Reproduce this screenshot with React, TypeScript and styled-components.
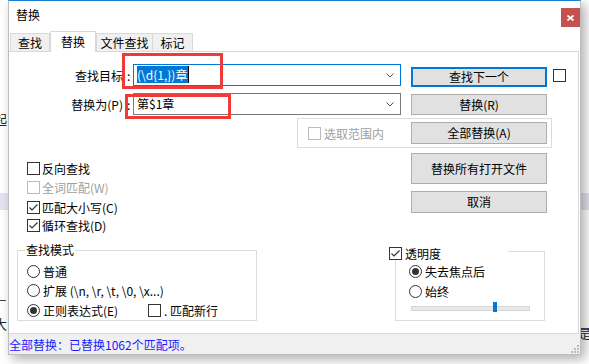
import React from "react";
import styled, { createGlobalStyle } from "styled-components";

const GlobalStyle = createGlobalStyle`
  * { box-sizing: border-box; }
  html, body { margin: 0; padding: 0; background: #fff; }
  body {
    width: 589px;
    height: 364px;
    overflow: hidden;
    font-family: "Noto Sans CJK SC", "Microsoft YaHei", sans-serif;
    font-size: 12px;
    color: #000;
  }
`;

const Page = styled.div`
  display: flex;
  width: 589px;
  height: 364px;
  background: #fff;
  overflow: hidden;
`;

const Backdrop = styled.div<{ $w: number }>`
  width: ${(p) => p.$w}px;
  flex: none;
  display: flex;
  flex-direction: column;
  overflow: hidden;
`;

const BgGlyph = styled.div<{ $top: number; $shift: number }>`
  flex: none;
  margin-top: ${(p) => p.$top}px;
  margin-left: ${(p) => p.$shift}px;
  height: 14px;
  line-height: 14px;
  font-size: 13px;
  white-space: nowrap;
  color: #222;
`;

const BgBand = styled.div<{ $top: number; $h: number }>`
  flex: none;
  margin-top: ${(p) => p.$top}px;
  height: ${(p) => p.$h}px;
  background: #e3e3f3;
`;

const BgRule = styled.div<{ $top: number }>`
  flex: none;
  margin-top: ${(p) => p.$top}px;
  height: 1px;
  width: 6px;
  background: #444;
`;

const Dialog = styled.div`
  position: relative;
  z-index: 1;
  flex: none;
  width: 573px;
  height: 355px;
  display: flex;
  flex-direction: column;
  background: #fff;
  border: 1px solid #bdbdbd;
  border-top: 1px solid #1a7fd6;
  box-shadow: 4px 4px 11px rgba(0, 0, 0, 0.32);
`;

const TitleBar = styled.div`
  height: 30px;
  flex: none;
  display: flex;
  justify-content: space-between;
  align-items: flex-start;
`;

const Title = styled.div`
  padding: 5px 0 0 7px;
  line-height: 18px;
`;

const CloseButton = styled.div`
  width: 19px;
  height: 19px;
  margin-top: 7px;
  background: #c75050;
  display: flex;
  align-items: center;
  justify-content: center;
`;

const TabStrip = styled.div`
  height: 20px;
  flex: none;
  display: flex;
  align-items: flex-end;
  padding-left: 1px;
  position: relative;
  z-index: 1;
`;

const Tab = styled.div<{ $active?: boolean; $w: number; $overlap?: boolean }>`
  width: ${(p) => p.$w}px;
  height: ${(p) => (p.$active ? 21 : 18)}px;
  margin-bottom: ${(p) => (p.$active ? -1 : 0)}px;
  margin-left: ${(p) => (p.$overlap ? -1 : 0)}px;
  border: 1px solid #d9d9d9;
  border-bottom: none;
  background: ${(p) => (p.$active ? "#fff" : "#f0f0f0")};
  display: flex;
  align-items: center;
  justify-content: center;
  line-height: 1;
  white-space: nowrap;
`;

const Pane = styled.div`
  flex: 1;
  margin-right: 1px;
  border-top: 1px solid #d9d9d9;
  border-right: 1px solid #d9d9d9;
  display: flex;
  flex-direction: column;
`;

const FieldRow = styled.div<{ $mt: number }>`
  display: flex;
  align-items: flex-start;
  height: 22px;
  margin-top: ${(p) => p.$mt}px;
`;

const FieldLabel = styled.label`
  width: 124px;
  height: 22px;
  flex: none;
  display: flex;
  align-items: center;
  justify-content: flex-end;
  white-space: nowrap;
`;

const Colon = styled.span`
  width: 10px;
  padding-left: 4px;
  flex: none;
`;

const Combo = styled.div<{ $focused?: boolean }>`
  width: 268px;
  height: 22px;
  flex: none;
  border: 1px solid ${(p) => (p.$focused ? "#0078d7" : "#7a7a7a")};
  background: #fff;
  display: flex;
  align-items: center;
  padding: 0 6px 0 3px;
`;

const ComboText = styled.span`
  flex: 1;
  line-height: 14px;
  white-space: nowrap;
`;

const Selected = styled.span`
  background: #0078d7;
  color: #fff;
  padding-right: 1px;
  border-right: 1px solid #000;
`;

const Button = styled.button<{
  $focused?: boolean;
  $h: number;
  $mt?: number;
  $ml?: number;
  $push?: boolean;
}>`
  width: 136px;
  height: ${(p) => p.$h}px;
  margin: ${(p) => p.$mt ?? 0}px 0 0 ${(p) => (p.$push ? "auto" : `${p.$ml ?? 0}px`)};
  flex: none;
  padding: 0;
  background: #e1e1e1;
  border: ${(p) => (p.$focused ? "2px solid #0078d7" : "1px solid #adadad")};
  font: inherit;
  font-size: 12px;
  color: #000;
  line-height: 1;
  display: flex;
  align-items: center;
  justify-content: center;
`;

const Box = styled.span<{ $disabled?: boolean; $mt?: number; $ml?: number }>`
  width: 13px;
  height: 13px;
  flex: none;
  margin: ${(p) => p.$mt ?? 0}px 0 0 ${(p) => p.$ml ?? 0}px;
  border: 1px solid ${(p) => (p.$disabled ? "#bcbcbc" : "#333")};
  background: #fff;
  display: flex;
  align-items: center;
  justify-content: center;
`;

const RadioCircle = styled.span<{ $on?: boolean }>`
  width: 13px;
  height: 13px;
  flex: none;
  border-radius: 50%;
  border: 1px solid #333;
  background: #fff;
  display: flex;
  align-items: center;
  justify-content: center;
  &::after {
    content: "";
    width: 7px;
    height: 7px;
    border-radius: 50%;
    background: ${(p) => (p.$on ? "#333" : "transparent")};
  }
`;

const Option = styled.div<{ $gap?: number; $disabled?: boolean; $mt?: number; $h?: number }>`
  display: flex;
  align-items: center;
  gap: ${(p) => p.$gap ?? 3}px;
  margin-top: ${(p) => p.$mt ?? 0}px;
  height: ${(p) => (p.$h ? `${p.$h}px` : "auto")};
  color: ${(p) => (p.$disabled ? "#a0a0a0" : "#000")};
  line-height: 13px;
  white-space: nowrap;
`;

const ScopeGroup = styled.div`
  margin: 3px 0 0 288px;
  width: 255px;
  height: 30px;
  border: 1px solid #dcdcdc;
  display: flex;
  align-items: center;
  padding: 0 4px 0 10px;
`;

const LowerArea = styled.div`
  display: grid;
  grid-template-columns: 402px 136px;
  align-items: start;
`;

const CheckList = styled.div`
  display: flex;
  flex-direction: column;
  padding-left: 18px;
`;

const ActionCol = styled.div`
  display: flex;
  flex-direction: column;
`;

const BottomArea = styled.div`
  display: flex;
  align-items: flex-start;
  margin-top: 18px;
`;

const Group = styled.div<{ $ml: number; $mt: number; $w: number; $h: number; $pl: number; $pt: number }>`
  position: relative;
  flex: none;
  margin: ${(p) => p.$mt}px 0 0 ${(p) => p.$ml}px;
  width: ${(p) => p.$w}px;
  height: ${(p) => p.$h}px;
  border: 1px solid #dcdcdc;
  padding: ${(p) => p.$pt}px 0 0 ${(p) => p.$pl}px;
  display: flex;
  flex-direction: column;
`;

const Legend = styled.div`
  position: absolute;
  top: -8px;
  left: 7px;
  padding: 0 1px;
  background: #fff;
  line-height: 14px;
`;

const CheckLegend = styled.div`
  position: absolute;
  top: -5px;
  left: -7px;
  width: 119px;
  height: 13px;
  background: #fff;
  display: flex;
  align-items: center;
  gap: 3px;
  line-height: 13px;
`;

const RadioRow = styled.div`
  height: 19.5px;
  display: flex;
  align-items: center;
  gap: 3px;
  white-space: nowrap;
`;

const SplitRow = styled.div`
  height: 19.5px;
  display: grid;
  grid-template-columns: 121px auto;
  align-items: center;
`;

const Slider = styled.div`
  position: relative;
  width: 119px;
  height: 10px;
  margin: 1px 0 0 2px;
`;

const Track = styled.div`
  position: absolute;
  left: 0;
  right: 0;
  top: 4px;
  height: 5px;
  background: #e7eaea;
  border: 1px solid #d6d6d6;
`;

const Thumb = styled.div<{ $pos: number }>`
  position: absolute;
  top: 0;
  left: ${(p) => p.$pos}px;
  width: 4px;
  height: 10px;
  background: #0078d7;
`;

const StatusBar = styled.div`
  height: 21px;
  flex: none;
  border-top: 1px solid #dadada;
  background: #f0f0f0;
  display: flex;
  align-items: center;
  justify-content: space-between;
  color: #1a1aff;
  white-space: nowrap;
`;

const Grip = styled.svg`
  align-self: flex-end;
  margin: 0 1px 1px 0;
`;

const Annotation = styled.div<{ $x: number; $y: number; $w: number; $h: number }>`
  position: absolute;
  left: ${(p) => p.$x}px;
  top: ${(p) => p.$y}px;
  width: ${(p) => p.$w}px;
  height: ${(p) => p.$h}px;
  border: 3px solid #f03a3a;
  pointer-events: none;
`;

const Check = () => (
  <svg width="11" height="11" viewBox="0 0 11 11">
    <polyline points="1.5,5.5 4,8 9.5,2.5" fill="none" stroke="#333" strokeWidth="1.2" />
  </svg>
);

const Chevron = () => (
  <svg width="8" height="5" viewBox="0 0 8 5">
    <polyline points="0.5,0.5 4,4 7.5,0.5" fill="none" stroke="#555" strokeWidth="1" />
  </svg>
);

const CheckOption: React.FC<{ label: string; checked?: boolean; disabled?: boolean; mt?: number; gap?: number }> = ({
  label,
  checked,
  disabled,
  mt,
  gap,
}) => (
  <Option $mt={mt} $gap={gap ?? 2} $disabled={disabled} $h={13}>
    <Box $disabled={disabled}>{checked && <Check />}</Box>
    <span>{label}</span>
  </Option>
);

const Radio: React.FC<{ label: string; on?: boolean }> = ({ label, on }) => (
  <RadioRow>
    <RadioCircle $on={on} />
    <span>{label}</span>
  </RadioRow>
);

export default function App() {
  return (
    <>
      <GlobalStyle />
      <Page>
        <Backdrop $w={8}>
          <BgGlyph $top={112} $shift={-6}>起</BgGlyph>
          <BgBand $top={67} $h={17} />
          <BgRule $top={90} />
          <BgGlyph $top={16} $shift={-6}>大</BgGlyph>
        </Backdrop>

        <Dialog>
          <TitleBar>
            <Title>替换</Title>
            <CloseButton>
              <svg width="7" height="6" viewBox="0 0 7 6">
                <path d="M0.5 0.5 L6.5 5.5 M6.5 0.5 L0.5 5.5" stroke="#fff" strokeWidth="1.7" />
              </svg>
            </CloseButton>
          </TitleBar>

          <TabStrip>
            <Tab $w={40}>查找</Tab>
            <Tab $w={46} $active>替换</Tab>
            <Tab $w={57}>文件查找</Tab>
            <Tab $w={41} $overlap>标记</Tab>
          </TabStrip>

          <Pane>
            <FieldRow $mt={12}>
              <FieldLabel>
                查找目标<Colon>:</Colon>
              </FieldLabel>
              <Combo $focused>
                <ComboText>
                  <Selected>(\d{"{"}1,{"}"})章</Selected>
                </ComboText>
                <Chevron />
              </Combo>
              <Button $focused $h={20} $mt={3} $ml={10}>
                查找下一个
              </Button>
              <Box $mt={5} $ml={6} />
            </FieldRow>

            <FieldRow $mt={7}>
              <FieldLabel>
                替换为(P)<Colon>:</Colon>
              </FieldLabel>
              <Combo>
                <ComboText>第$1章</ComboText>
                <Chevron />
              </Combo>
              <Button $h={21} $mt={1} $ml={10}>
                替换(R)
              </Button>
            </FieldRow>

            <ScopeGroup>
              <CheckOption label="选取范围内" disabled gap={3} />
              <Button $h={22} $push>
                全部替换(A)
              </Button>
            </ScopeGroup>

            <LowerArea>
              <CheckList>
                <CheckOption label="反向查找" mt={14} />
                <CheckOption label="全词匹配(W)" disabled mt={6} />
                <CheckOption label="匹配大小写(C)" checked mt={7} />
                <CheckOption label="循环查找(D)" checked mt={5} />
              </CheckList>
              <ActionCol>
                <Button $h={31} $mt={5}>
                  替换所有打开文件
                </Button>
                <Button $h={22} $mt={7}>
                  取消
                </Button>
              </ActionCol>
            </LowerArea>

            <BottomArea>
              <Group $ml={8} $mt={0} $w={240} $h={71} $pl={9} $pt={11}>
                <Legend>查找模式</Legend>
                <Radio label="普通" />
                <Radio label={"扩展 (\\n, \\r, \\t, \\0, \\x...)"} />
                <SplitRow>
                  <Radio label="正则表达式(E)" on />
                  <CheckOption label=". 匹配新行" gap={3} />
                </SplitRow>
              </Group>

              <Group $ml={138} $mt={1} $w={150} $h={70} $pl={13} $pt={10}>
                <CheckLegend>
                  <Box>
                    <Check />
                  </Box>
                  <span>透明度</span>
                </CheckLegend>
                <Radio label="失去焦点后" on />
                <Radio label="始终" />
                <Slider>
                  <Track />
                  <Thumb $pos={82} />
                </Slider>
              </Group>
            </BottomArea>
          </Pane>

          <StatusBar>
            <span>全部替换：已替换1062个匹配项。</span>
            <Grip width="8" height="8" viewBox="0 0 8 8">
              <rect x="6" y="0" width="2" height="2" fill="#bcbcbc" />
              <rect x="3" y="3" width="2" height="2" fill="#bcbcbc" />
              <rect x="6" y="3" width="2" height="2" fill="#bcbcbc" />
              <rect x="0" y="6" width="2" height="2" fill="#bcbcbc" />
              <rect x="3" y="6" width="2" height="2" fill="#bcbcbc" />
              <rect x="6" y="6" width="2" height="2" fill="#bcbcbc" />
            </Grip>
          </StatusBar>

          <Annotation $x={113} $y={52} $w={101} $h={36} />
          <Annotation $x={116} $y={93} $w={106} $h={25} />
        </Dialog>

        <Backdrop $w={8}>
          <BgBand $top={193} $h={17} />
          <BgGlyph $top={116} $shift={-3}>是</BgGlyph>
        </Backdrop>
      </Page>
    </>
  );
}
